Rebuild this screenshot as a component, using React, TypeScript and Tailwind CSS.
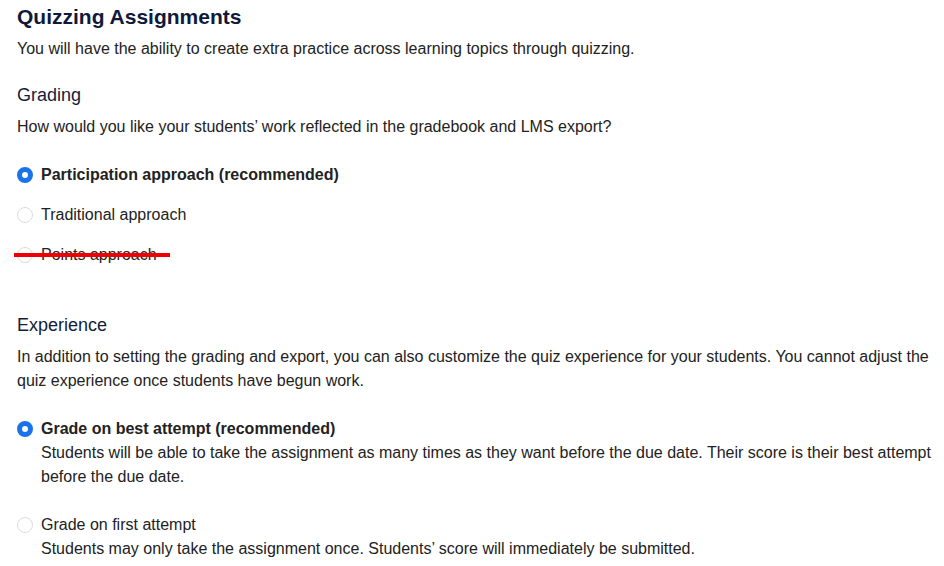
import React, { useState } from 'react';

type Option = { id: string; label: string; description?: string; struck?: boolean };

const gradingOptions: Option[] = [
  { id: 'participation', label: 'Participation approach (recommended)' },
  { id: 'traditional', label: 'Traditional approach' },
  { id: 'points', label: 'Points approach', struck: true },
];

const experienceOptions: Option[] = [
  {
    id: 'best',
    label: 'Grade on best attempt (recommended)',
    description:
      'Students will be able to take the assignment as many times as they want before the due date. Their score is their best attempt before the due date.',
  },
  {
    id: 'first',
    label: 'Grade on first attempt',
    description: 'Students may only take the assignment once. Students\u2019 score will immediately be submitted.',
  },
];

const Radio: React.FC<{ checked: boolean }> = ({ checked }) => (
  <span
    className={`mt-1 h-4 w-4 shrink-0 rounded-full bg-white ${
      checked ? 'border-[5px] border-[#1a73e8]' : 'border border-[#dcdcdc]'
    }`}
  />
);

const App: React.FC = () => {
  const [grading, setGrading] = useState('participation');
  const [experience, setExperience] = useState('best');

  return (
    <div
      className="min-h-screen bg-white pl-[17px] pr-3 pt-[3px] text-[16px] leading-6 text-[#222222]"
      style={{ fontFamily: '"Liberation Sans", Arial, sans-serif' }}
    >
      <h1 className="text-[21px] font-bold leading-7 text-[#0f1a3a]">Quizzing Assignments</h1>
      <p className="mt-[6px]">You will have the ability to create extra practice across learning topics through quizzing.</p>

      <h2 className="mt-[22px] text-[18px] leading-6 text-[#131d3a]">Grading</h2>
      <p className="mt-[8px]">How would you like your students&rsquo; work reflected in the gradebook and LMS export?</p>

      <div className="mt-6 flex flex-col gap-4">
        {gradingOptions.map((o) => (
          <button
            key={o.id}
            onClick={() => !o.struck && setGrading(o.id)}
            className="relative flex items-start gap-2 text-left"
          >
            <Radio checked={grading === o.id} />
            <span className={grading === o.id ? 'font-bold' : ''}>{o.label}</span>
            {o.struck && <span className="absolute left-[-3px] top-[10px] h-1 w-[156px] bg-[#ee0000]" />}
          </button>
        ))}
      </div>

      <h2 className="mt-[46px] text-[18px] leading-6 text-[#131d3a]">Experience</h2>
      <p className="mt-[8px]">
        In addition to setting the grading and export, you can also customize the quiz experience for your students. You cannot adjust the
        quiz experience once students have begun work.
      </p>

      <div className="mt-6 flex flex-col gap-6">
        {experienceOptions.map((o) => (
          <button key={o.id} onClick={() => setExperience(o.id)} className="flex items-start gap-2 text-left">
            <Radio checked={experience === o.id} />
            <span className="flex flex-col">
              <span className={experience === o.id ? 'font-bold' : ''}>{o.label}</span>
              <span>{o.description}</span>
            </span>
          </button>
        ))}
      </div>
    </div>
  );
};

export default App;
